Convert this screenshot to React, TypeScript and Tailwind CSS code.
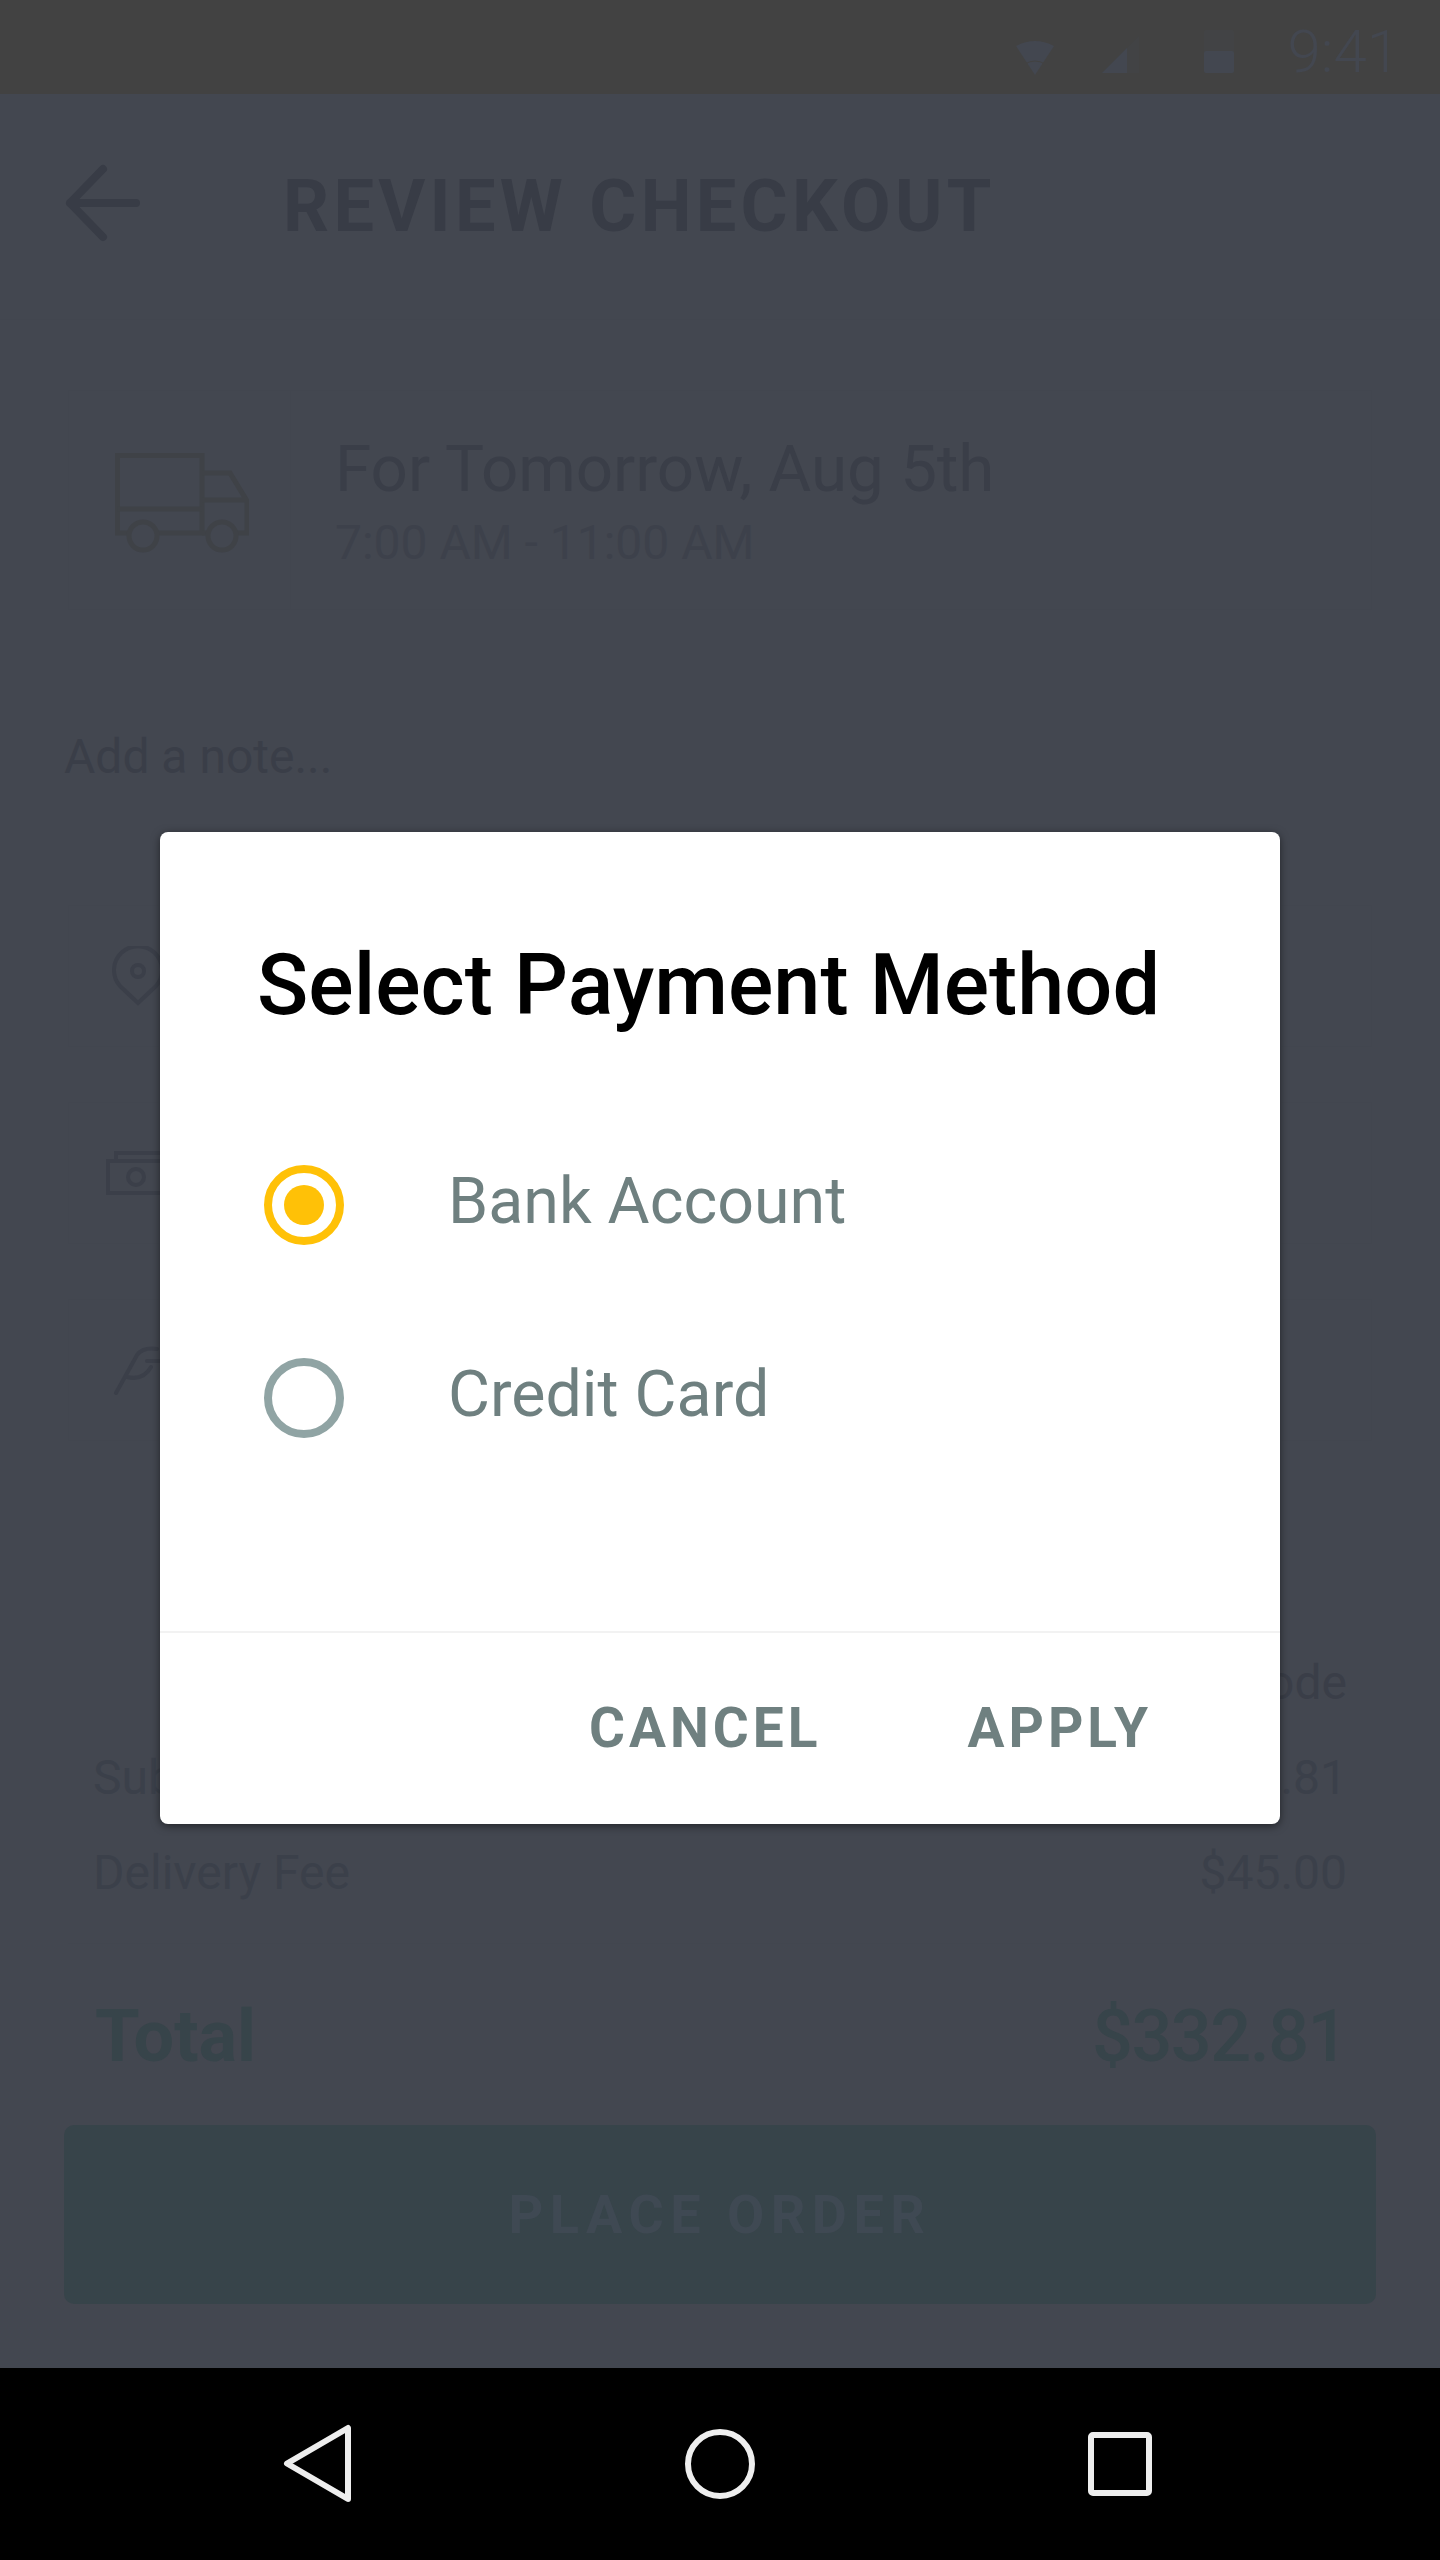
import React from 'react';

const font = { fontFamily: 'Roboto, sans-serif' };

const TruckIcon = () => (
  <svg width="134" height="100" viewBox="0 0 134 100" fill="none" stroke="#3f4247" strokeWidth="5">
    <path d="M14 80H2.5V2.5H87V80H42" />
    <path d="M2.5 56H87" />
    <path d="M87 20h28l17 28v32h-10M87 47h45M87 80h6" />
    <circle cx="28" cy="83" r="14" />
    <circle cx="107" cy="83" r="14" />
  </svg>
);

const Row = ({ left, right }: { left: string; right: string }) => (
  <div className="flex justify-between text-[48px] leading-[95px] text-[#3b404a]">
    <span>{left}</span>
    <span>{right}</span>
  </div>
);

const App = () => {
  return (
    <div className="relative w-[1440px] h-[2560px] overflow-hidden bg-[#434750] flex flex-col" style={font}>
      {/* status bar */}
      <div className="h-[94px] bg-[#424242] flex items-end justify-end pr-[40px] pb-[21px]">
        <svg width="38" height="35" viewBox="0 0 38 35" className="-mb-[2px]">
          <path d="M0 6Q19-4 38 6L19 35Z" fill="#434750" />
          <path d="M9 24Q19 18 29 24" fill="none" stroke="#424242" strokeWidth="1" />
        </svg>
        <svg width="37" height="37" viewBox="0 0 37 37" className="ml-[48px]">
          <path d="M0 37L37 0V37Z" fill="#434750" fillOpacity="0.25" />
          <path d="M0 37L25 12V37Z" fill="#434750" />
        </svg>
        <div className="ml-[65px] w-[30px] h-[43px] flex flex-col bg-[#434750]/25 rounded-[2px]">
          <div className="mt-auto h-[22px] bg-[#434750] rounded-[2px]" />
        </div>
        <span className="ml-[54px] -mb-[9px] text-[60px] font-light text-[#434750] leading-none">9:41</span>
      </div>

      {/* header */}
      <div className="h-[226px] border-b border-[#42464f] flex items-center pl-[62px]">
        <svg width="82" height="84" viewBox="0 0 82 84" fill="none" stroke="#383c46" strokeWidth="8" strokeLinecap="round" strokeLinejoin="round" className="mb-[8px]">
          <path d="M41 8L8 42l33 34M8 42h66" />
        </svg>
        <h1 className="ml-[139px] text-[72px] font-bold tracking-[4.3px] text-[#383c46] leading-none">REVIEW CHECKOUT</h1>
      </div>

      {/* delivery time */}
      <div className="mt-[70px] mx-[68px] h-[220px] border border-[#42464f] flex">
        <div className="w-[222px] border-r border-[#42464f] flex items-center pl-[46px] pt-[6px]">
          <TruckIcon />
        </div>
        <div className="pl-[44px] pt-[38px]">
          <div className="text-[65.5px] leading-[80px] text-[#3a3e48]">For Tomorrow, Aug 5th</div>
          <div className="text-[48px] leading-[68px] text-[#3d414b]">7:00 AM - 11:00 AM</div>
        </div>
      </div>

      <div className="mt-[117px] ml-[64px] text-[48px] leading-[60px] text-[#3a3e48]">Add a note...</div>

      {/* address, payment and tip rows, mostly under the dialog */}
      <div className="mt-[118px] mx-[68px] flex flex-col gap-[55px]">
        <div className="h-[142px] border border-[#42464f] flex items-center pl-[43px]">
          <svg width="52" height="60" viewBox="0 0 52 60" fill="none" stroke="#3b3f49" strokeWidth="4"><path d="M26 57L8 40a24 24 0 1 1 36 0Z" /><circle cx="26" cy="25" r="6" /></svg>
        </div>
        <div className="h-[142px] border border-[#42464f] flex items-center pl-[37px]">
          <svg width="60" height="44" viewBox="0 0 60 44" fill="none" stroke="#3b3f49" strokeWidth="4"><path d="M10 9V2h50M2 10h58v32H2Z" /><circle cx="30" cy="26" r="8" /></svg>
        </div>
        <div className="h-[142px] border border-[#42464f] flex items-center pl-[44px]">
          <svg width="48" height="50" viewBox="0 0 48 50" fill="none" stroke="#3b3f49" strokeWidth="4" strokeLinecap="round"><path d="M3 48L24 10Q30 2 44 4M14 32Q30 36 38 22M34 16h14" /></svg>
        </div>
      </div>

      {/* totals */}
      <div className="mt-[212px] mx-[93px] flex justify-end text-[48px] leading-[60px] text-[#3a3e48]">Promo Code</div>
      <div className="mx-[93px] mt-[17px]">
        <Row left="Subtotal" right="$287.81" />
        <Row left="Delivery Fee" right="$45.00" />
      </div>
      <div className="mt-[23px] mx-[68px] border-t border-[#42464f]" />
      <div className="mt-[51px] ml-[95px] mr-[93px] flex justify-between text-[72px] font-medium leading-[84px] text-[#37444a]">
        <span className="font-bold">Total</span>
        <span className="tracking-[-1.5px]">$332.81</span>
      </div>
      <div className="mt-[46px] mx-[64px] h-[179px] rounded-[10px] bg-[#37444a] flex items-center justify-center text-[54px] font-bold tracking-[6.5px] text-[#3f4953]">
        PLACE ORDER
      </div>

      {/* nav bar */}
      <div className="absolute left-0 bottom-0 w-full h-[192px] bg-black">
        <svg className="absolute left-[282px] top-[56px]" width="74" height="82" viewBox="0 0 74 82" fill="none" stroke="#eeeeee" strokeWidth="6" strokeLinejoin="round"><path d="M66 4V75L5 39.5Z" /></svg>
        <svg className="absolute left-[684px] top-[60px]" width="72" height="72" viewBox="0 0 72 72" fill="none" stroke="#eeeeee" strokeWidth="6"><circle cx="36" cy="36" r="32" /></svg>
        <svg className="absolute left-[1086px] top-[62px]" width="68" height="68" viewBox="0 0 68 68" fill="none" stroke="#eeeeee" strokeWidth="6" strokeLinejoin="round"><rect x="5" y="5" width="58" height="58" rx="2" /></svg>
      </div>

      {/* dialog */}
      <div className="absolute left-[160px] top-[832px] w-[1120px] h-[992px] bg-white rounded-[8px] shadow-[0_2px_8px_rgba(0,0,0,0.5)] flex flex-col">
        <div className="pt-[105px] pl-[97px] text-[84.7px] leading-[96px] font-medium text-black">Select Payment Method</div>
        <div className="mt-[132px] pl-[104px] flex flex-col gap-[113px]">
          <div className="flex items-center">
            <div className="w-[80px] h-[80px] rounded-full border-[8px] border-[#ffc107] flex items-center justify-center">
              <div className="w-[40px] h-[40px] rounded-full bg-[#ffc107]" />
            </div>
            <span className="ml-[104px] mb-[8px] text-[64.5px] text-[#6f8080] leading-none">Bank Account</span>
          </div>
          <div className="flex items-center">
            <div className="w-[80px] h-[80px] rounded-full border-[8px] border-[#90a4a4]" />
            <span className="ml-[104px] mb-[8px] text-[64.5px] text-[#6f8080] leading-none">Credit Card</span>
          </div>
        </div>
        <div className="mt-auto h-[193px] border-t-2 border-[#f2f2f2] flex items-center justify-end gap-[146px] pr-[128px] text-[55px] font-bold tracking-[4px] text-[#6f8080]">
          <span>CANCEL</span>
          <span>APPLY</span>
        </div>
      </div>
    </div>
  );
};

export default App;
